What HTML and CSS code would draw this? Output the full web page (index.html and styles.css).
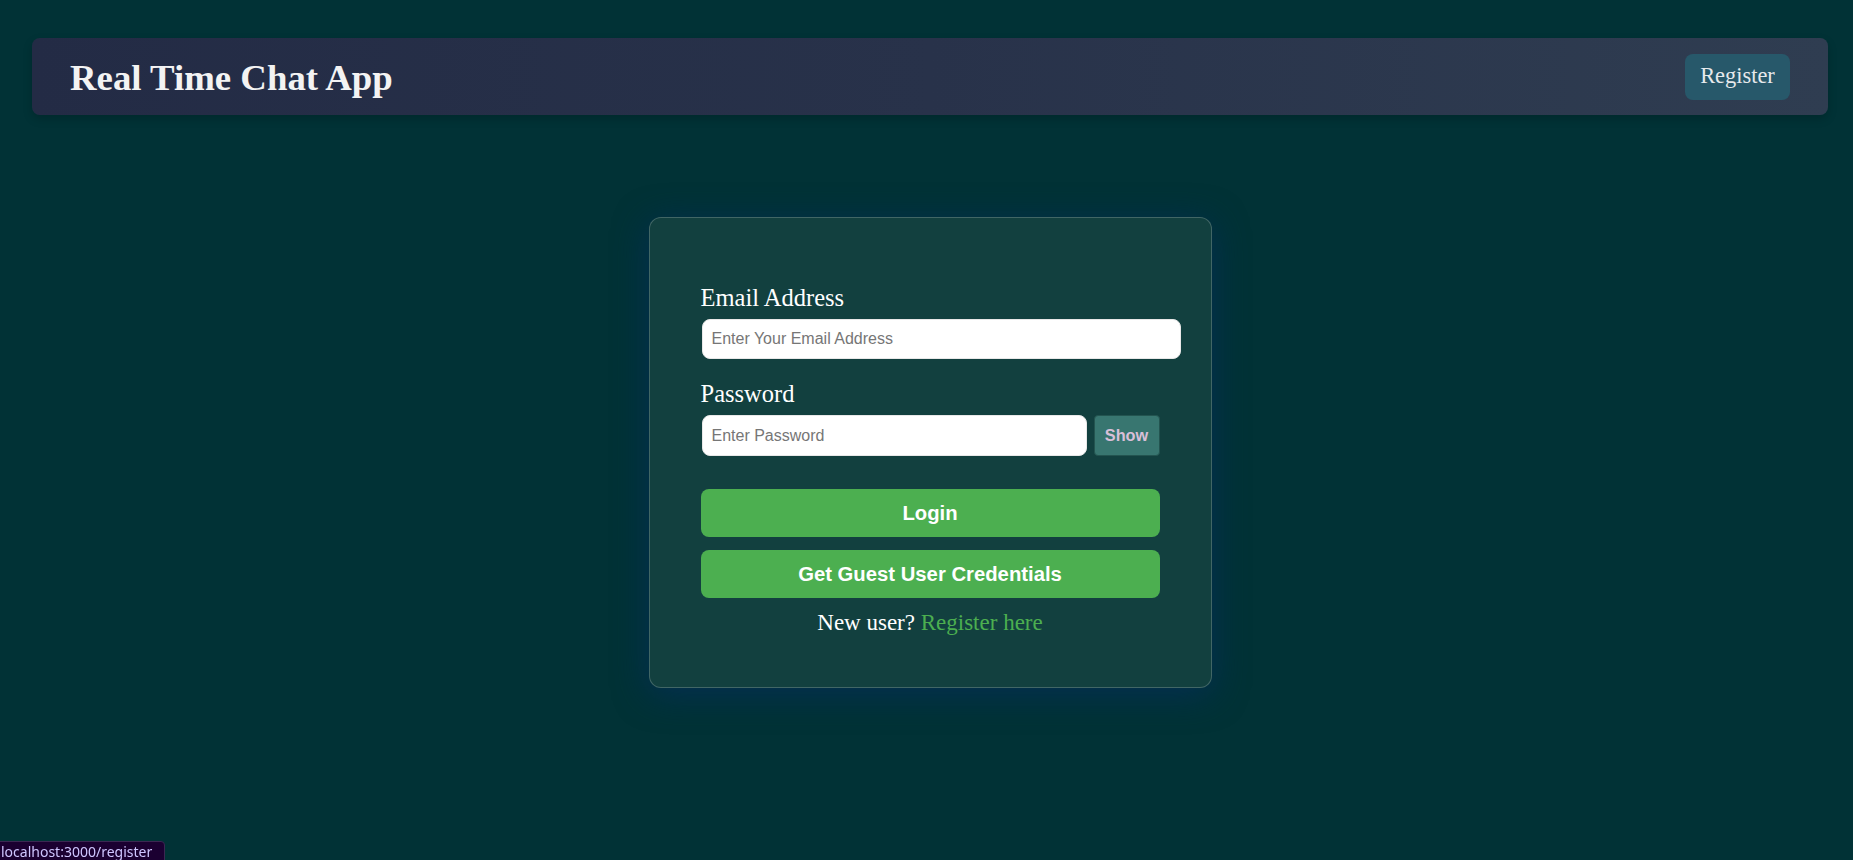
FILE: index.html
```html
<!DOCTYPE html>
<html lang="en">
<head>
<meta charset="utf-8">
<title>Real Time Chat App</title>
<link rel="stylesheet" href="styles.css">
</head>
<body>
<div class="page">
  <header class="topbar">
    <h1 class="brand">Real Time Chat App</h1>
    <a class="nav-btn" href="#">Register</a>
  </header>

  <main class="card">
    <form class="login-form">
      <div class="field">
        <label class="field-label" for="email">Email Address</label>
        <input class="text-input email-input" id="email" type="email" placeholder="Enter Your Email Address">
      </div>
      <div class="field">
        <label class="field-label" for="password">Password</label>
        <div class="pw-row">
          <input class="text-input pw-input" id="password" type="password" placeholder="Enter Password">
          <button class="show-btn" type="button">Show</button>
        </div>
      </div>
      <button class="primary-btn login-btn" type="submit">Login</button>
      <button class="primary-btn guest-btn" type="button">Get Guest User Credentials</button>
      <p class="switch-text">New user? <a class="switch-link" href="#">Register here</a></p>
    </form>
  </main>
</div>
<div class="status-bubble">localhost:3000/register</div>
</body>
</html>
```

FILE: styles.css
```css
* { box-sizing: border-box; }

html, body {
  margin: 0;
  padding: 0;
  height: 100%;
}

body {
  background: #013236;
  font-family: "Liberation Serif", "Times New Roman", serif;
  color: #ffffff;
  overflow: hidden;
}

.page {
  padding: 38px 25px 0 32px;
}

.topbar {
  height: 77px;
  display: flex;
  align-items: center;
  justify-content: space-between;
  padding: 0 38px 0 38px;
  border-radius: 8px;
  background: linear-gradient(90deg, #232b45 0%, #28324a 50%, #2f3d51 100%);
  box-shadow: 0 4px 10px rgba(0, 0, 0, 0.18);
}

.brand {
  margin: 0;
  font-family: "Liberation Serif", "Times New Roman", serif;
  font-size: 36.8px;
  font-weight: bold;
  color: #f3f3f3;
  line-height: 42px;
  margin-top: 2px;
}

.nav-btn {
  display: flex;
  align-items: center;
  justify-content: center;
  width: 105px;
  height: 46px;
  border-radius: 8px;
  background: #27586a;
  color: #e6e9ec;
  font-size: 22.4px;
  text-decoration: none;
  padding-bottom: 1px;
}

.card {
  width: 563px;
  margin: 102px auto 0;
  padding: 66px 51px 51px;
  border: 1px solid rgba(255, 255, 255, 0.2);
  border-radius: 12px;
  background: #12403f;
  box-shadow: 0 6px 34px rgba(6, 46, 92, 0.75);
}

.login-form {
  display: flex;
  flex-direction: column;
}

.field {
  margin-bottom: 21px;
}

.field:nth-child(2) {
  margin-bottom: 33px;
}

.field-label {
  display: block;
  font-size: 24.5px;
  line-height: 28px;
  margin-bottom: 7px;
  color: #ffffff;
}

.text-input {
  font-family: "Liberation Sans", Arial, sans-serif;
  font-size: 16px;
  line-height: 18px;
  padding: 10px 9px;
  border: 1px solid #e8e8e8;
  border-radius: 8px;
  background: #ffffff;
  color: #222;
  outline: none;
}

.text-input::placeholder {
  color: #767676;
}

.email-input {
  box-sizing: content-box;
  width: 100%;
  padding: 10px 9px;
  margin-left: 1px;
  display: block;
}

.pw-row {
  display: flex;
  gap: 7px;
  height: 41px;
}

.pw-input {
  flex: 1;
  height: 41px;
  margin-left: 1px;
}

.show-btn {
  width: 66px;
  height: 41px;
  border: 1px solid #235450;
  border-radius: 4px;
  background: #387670;
  color: #d8bfd8;
  font-family: "Liberation Sans", Arial, sans-serif;
  font-size: 16.3px;
  font-weight: bold;
  padding: 0;
}

.primary-btn {
  height: 48px;
  border: none;
  border-radius: 8px;
  background: #4caf50;
  color: #ffffff;
  font-family: "Liberation Sans", Arial, sans-serif;
  font-size: 20.3px;
  font-weight: bold;
  padding: 0;
}

.guest-btn {
  margin-top: 13px;
}

.switch-text {
  margin: 12px 0 0;
  text-align: center;
  font-size: 23px;
  line-height: 26px;
  color: #ffffff;
}

.switch-link {
  color: #4caf50;
  text-decoration: none;
}

.status-bubble {
  position: fixed;
  left: -3px;
  bottom: -5px;
  width: 168px;
  height: 24px;
  padding: 0 0 0 3px;
  background: #1b0031;
  border: 1px solid #3b2752;
  border-radius: 0 4px 0 0;
  color: #cfc6ff;
  font-family: "Noto Sans", "Open Sans", sans-serif;
  font-size: 14px;
  line-height: 20px;
  white-space: nowrap;
  overflow: hidden;
}
```
